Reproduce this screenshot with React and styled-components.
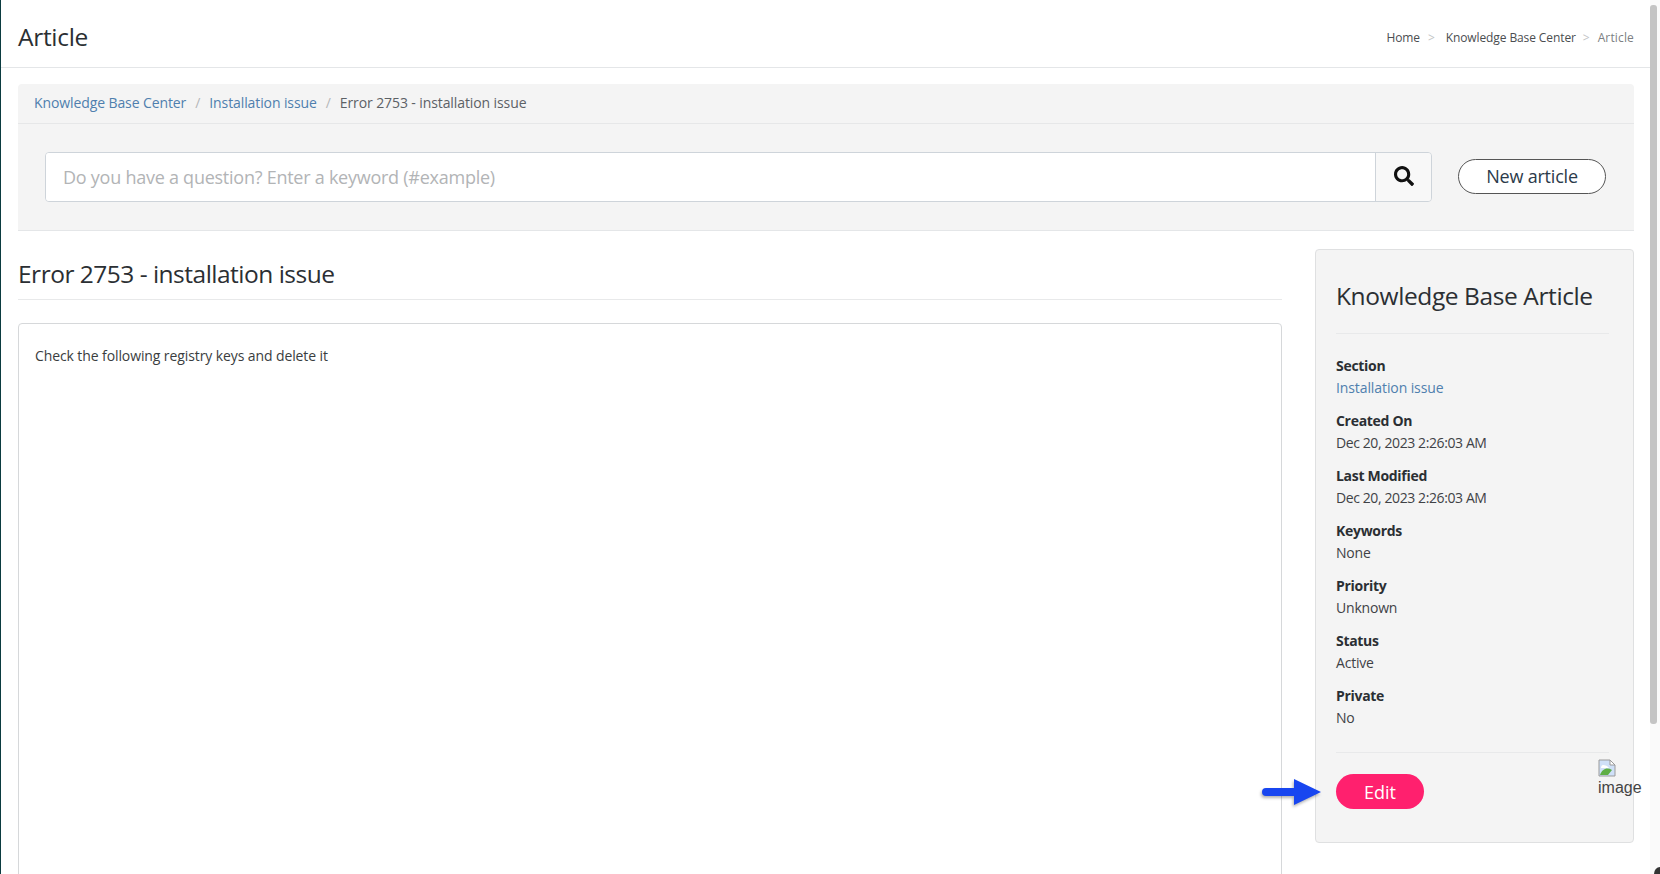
import React from 'react';
import styled, { createGlobalStyle } from 'styled-components';
import { FaSearch } from 'react-icons/fa';

const GlobalStyle = createGlobalStyle`
  html, body {
    margin: 0;
    height: 100%;
    overflow: hidden;
    background: #fff;
  }
  * { box-sizing: border-box; }
`;

const Page = styled.div`
  position: relative;
  height: 874px;
  display: flex;
  background: #fff;
  font-family: 'Open Sans', 'Noto Sans', sans-serif;
  color: #343a40;
  overflow: hidden;
  border-left: 1px solid #0b3b40;
`;

const Main = styled.div`
  flex: 1;
  min-width: 0;
  display: flex;
  flex-direction: column;
`;

const TopBar = styled.header`
  height: 68px;
  flex-shrink: 0;
  padding: 5px 16px 0 17px;
  display: flex;
  align-items: center;
  justify-content: space-between;
  border-bottom: 1px solid #e4e6e8;
`;

const PageTitle = styled.h1`
  margin: 0;
  font-size: 24.5px;
  font-weight: 400;
  letter-spacing: -0.3px;
  color: #2b2f33;
`;

const Crumbs = styled.nav`
  display: flex;
  align-items: center;
  padding-top: 2px;
  font-size: 12px;
  letter-spacing: -0.1px;
`;

const Crumb = styled.span`
  color: ${(p) => (p.$active ? '#7c7f82' : '#4a4d50')};
  letter-spacing: ${(p) => (p.$active ? '0.15px' : 'inherit')};
`;

const CrumbArrow = styled.span`
  color: #c2c4c6;
  margin: 0 ${(p) => p.$gap || 8}px 0 ${(p) => (p.$gap ? 8 : 7)}px;
`;

const Content = styled.div`
  flex: 1;
  min-height: 0;
  padding: 16px 16px 0 17px;
  display: flex;
  flex-direction: column;
`;

const SearchPanel = styled.section`
  background: #f4f4f4;
  border-bottom: 1px solid #e4e6e8;
  border-radius: 4px 4px 0 0;
`;

const ArticleTrail = styled.div`
  height: 40px;
  padding: 0 16px 2px;
  display: flex;
  align-items: center;
  font-size: 14px;
  letter-spacing: -0.1px;
  border-bottom: 1px solid #e6e7e8;
`;

const TrailLink = styled.a`
  color: #4f7fae;
`;

const TrailSep = styled.span`
  color: #b5b7b9;
  margin: 0 9px;
`;

const TrailCurrent = styled.span`
  color: #5c6166;
`;

const SearchRow = styled.div`
  height: 106px;
  padding: 28px 28px 0 27px;
  display: flex;
  align-items: flex-start;
`;

const SearchBox = styled.div`
  flex: 1;
  height: 50px;
  display: flex;
  border: 1px solid #ced4da;
  border-radius: 4px;
  overflow: hidden;
`;

const SearchInput = styled.input`
  flex: 1;
  min-width: 0;
  border: 0;
  outline: 0;
  padding: 0 17px;
  font: inherit;
  font-size: 18px;
  letter-spacing: -0.25px;
  background: #fff;
  &::placeholder { color: #b2b4b6; opacity: 1; }
`;

const SearchButton = styled.button`
  width: 56px;
  border: 0;
  border-left: 1px solid #ced4da;
  background: #f8f8f8;
  display: flex;
  align-items: center;
  justify-content: center;
  padding: 0 0 3px;
  color: #111;
  font-size: 20px;
`;

const NewButton = styled.button`
  width: 148px;
  height: 35px;
  margin: 7px 0 0 26px;
  border: 1px solid #555;
  border-radius: 18px;
  background: #fff;
  color: #2b3a4a;
  font: inherit;
  font-size: 18px;
  letter-spacing: -0.2px;
  padding: 0 0 2px;
`;

const Columns = styled.div`
  flex: 1;
  min-height: 0;
  display: flex;
  gap: 33px;
  padding-top: 18px;
`;

const ArticleColumn = styled.article`
  flex: 1;
  min-width: 0;
  display: flex;
  flex-direction: column;
`;

const ArticleHeading = styled.h2`
  margin: 0;
  height: 51px;
  padding-top: 8px;
  font-size: 24.5px;
  font-weight: 400;
  letter-spacing: -0.5px;
  color: #2b2f33;
  border-bottom: 1px solid #e8e9ea;
`;

const ArticleBody = styled.div`
  flex: 1;
  margin-top: 23px;
  margin-bottom: -30px;
  padding: 22px 16px;
  font-size: 14px;
  letter-spacing: -0.1px;
  color: #3a3d40;
  border: 1px solid #d6d8da;
  border-radius: 4px;
`;

const Sidebar = styled.aside`
  width: 319px;
  height: 594px;
  flex-shrink: 0;
  position: relative;
  padding: 0 24px 0 20px;
  background: #f4f4f4;
  border: 1px solid #dfe0e1;
  border-radius: 4px;
`;

const SideTitle = styled.h3`
  margin: 0;
  height: 84px;
  padding-top: 29px;
  font-size: 24.5px;
  font-weight: 400;
  letter-spacing: -0.4px;
  white-space: nowrap;
  color: #2b2f33;
  border-bottom: 1px solid #e8e9ea;
`;

const MetaList = styled.dl`
  margin: 21px 0 0;
  padding-bottom: 12px;
  border-bottom: 1px solid #e8e9ea;
`;

const MetaLabel = styled.dt`
  height: 22px;
  line-height: 22px;
  font-size: 14px;
  font-weight: 700;
  letter-spacing: -0.3px;
  color: #2b2f33;
`;

const MetaValue = styled.dd`
  margin: 0 0 11px;
  height: 22px;
  line-height: 22px;
  font-size: 14px;
  letter-spacing: ${(p) => (p.$kind === 'date' ? '-0.4px' : p.$kind === 'link' ? '-0.1px' : '-0.2px')};
  color: ${(p) => (p.$kind === 'link' ? '#4f7fae' : '#3f4246')};
`;

const SideFooter = styled.div`
  padding-top: 21px;
`;

const EditButton = styled.button`
  width: 88px;
  height: 35px;
  border: 0;
  border-radius: 18px;
  background: #ff206e;
  color: #fff;
  font: inherit;
  font-size: 18px;
`;

const BrokenImage = styled.div`
  position: absolute;
  right: -9px;
  bottom: 45px;
  width: 44px;
  font-family: 'Liberation Sans', Arial, sans-serif;
  font-size: 16px;
  line-height: 18px;
  color: #444;
  svg { display: block; margin-bottom: 2px; }
`;

const MarkerArrow = styled.svg`
  position: absolute;
  left: -54px;
  bottom: 36px;
  overflow: visible;
  filter: drop-shadow(-1px 2px 1.5px rgba(0, 0, 0, 0.3));
`;

const Scrollbar = styled.div`
  width: 10px;
  flex-shrink: 0;
  padding: 5px 3px 0 0;
  background: #fafafa;
`;

const ScrollThumb = styled.div`
  height: 719px;
  background: #c4c4c4;
  border-radius: 3px;
`;

const WindowCorner = styled.div`
  position: absolute;
  right: 0;
  bottom: 0;
  width: 6px;
  height: 7px;
  background: #333;
  border-top-left-radius: 100%;
`;

const meta = [
  ['Section', 'Installation issue', 'link'],
  ['Created On', 'Dec 20, 2023 2:26:03 AM', 'date'],
  ['Last Modified', 'Dec 20, 2023 2:26:03 AM', 'date'],
  ['Keywords', 'None'],
  ['Priority', 'Unknown'],
  ['Status', 'Active'],
  ['Private', 'No'],
];

export default function App() {
  return (
    <>
      <GlobalStyle />
      <Page>
        <Main>
          <TopBar>
            <PageTitle>Article</PageTitle>
            <Crumbs>
              <Crumb>Home</Crumb>
              <CrumbArrow $gap={11}>&gt;</CrumbArrow>
              <Crumb>Knowledge Base Center</Crumb>
              <CrumbArrow>&gt;</CrumbArrow>
              <Crumb $active>Article</Crumb>
            </Crumbs>
          </TopBar>
          <Content>
            <SearchPanel>
              <ArticleTrail>
                <TrailLink>Knowledge Base Center</TrailLink>
                <TrailSep>/</TrailSep>
                <TrailLink>Installation issue</TrailLink>
                <TrailSep>/</TrailSep>
                <TrailCurrent>Error 2753 - installation issue</TrailCurrent>
              </ArticleTrail>
              <SearchRow>
                <SearchBox>
                  <SearchInput placeholder="Do you have a question? Enter a keyword (#example)" />
                  <SearchButton><FaSearch /></SearchButton>
                </SearchBox>
                <NewButton>New article</NewButton>
              </SearchRow>
            </SearchPanel>
            <Columns>
              <ArticleColumn>
                <ArticleHeading>Error 2753 - installation issue</ArticleHeading>
                <ArticleBody>Check the following registry keys and delete it</ArticleBody>
              </ArticleColumn>
              <Sidebar>
                <SideTitle>Knowledge Base Article</SideTitle>
                <MetaList>
                  {meta.map(([label, value, kind]) => (
                    <React.Fragment key={label}>
                      <MetaLabel>{label}</MetaLabel>
                      <MetaValue $kind={kind}>{value}</MetaValue>
                    </React.Fragment>
                  ))}
                </MetaList>
                <SideFooter>
                  <EditButton>Edit</EditButton>
                </SideFooter>
                <BrokenImage>
                  <svg width="18" height="18" viewBox="0 0 18 18">
                    <path d="M1 1h11l5 5v11H1z" fill="#cfe0f8" stroke="#9a9a9a" />
                    <path d="M12 1v5h5z" fill="#fff" stroke="#9a9a9a" />
                    <path d="M5 6c2 0 5 1 6 3H3c0-2 1-3 2-3z" fill="#fff" />
                    <path d="M2 16c2-6 7-8 12-5l-4 5z" fill="#5fae45" />
                  </svg>
                  image
                </BrokenImage>
                <MarkerArrow width="60" height="28" viewBox="0 0 60 28">
                  <path d="M4 10h28V1l27 13-27 13V18H4a4 4 0 0 1 0-8z" fill="#1846f0" />
                </MarkerArrow>
              </Sidebar>
            </Columns>
          </Content>
        </Main>
        <Scrollbar><ScrollThumb /></Scrollbar>
        <WindowCorner />
      </Page>
    </>
  );
}
